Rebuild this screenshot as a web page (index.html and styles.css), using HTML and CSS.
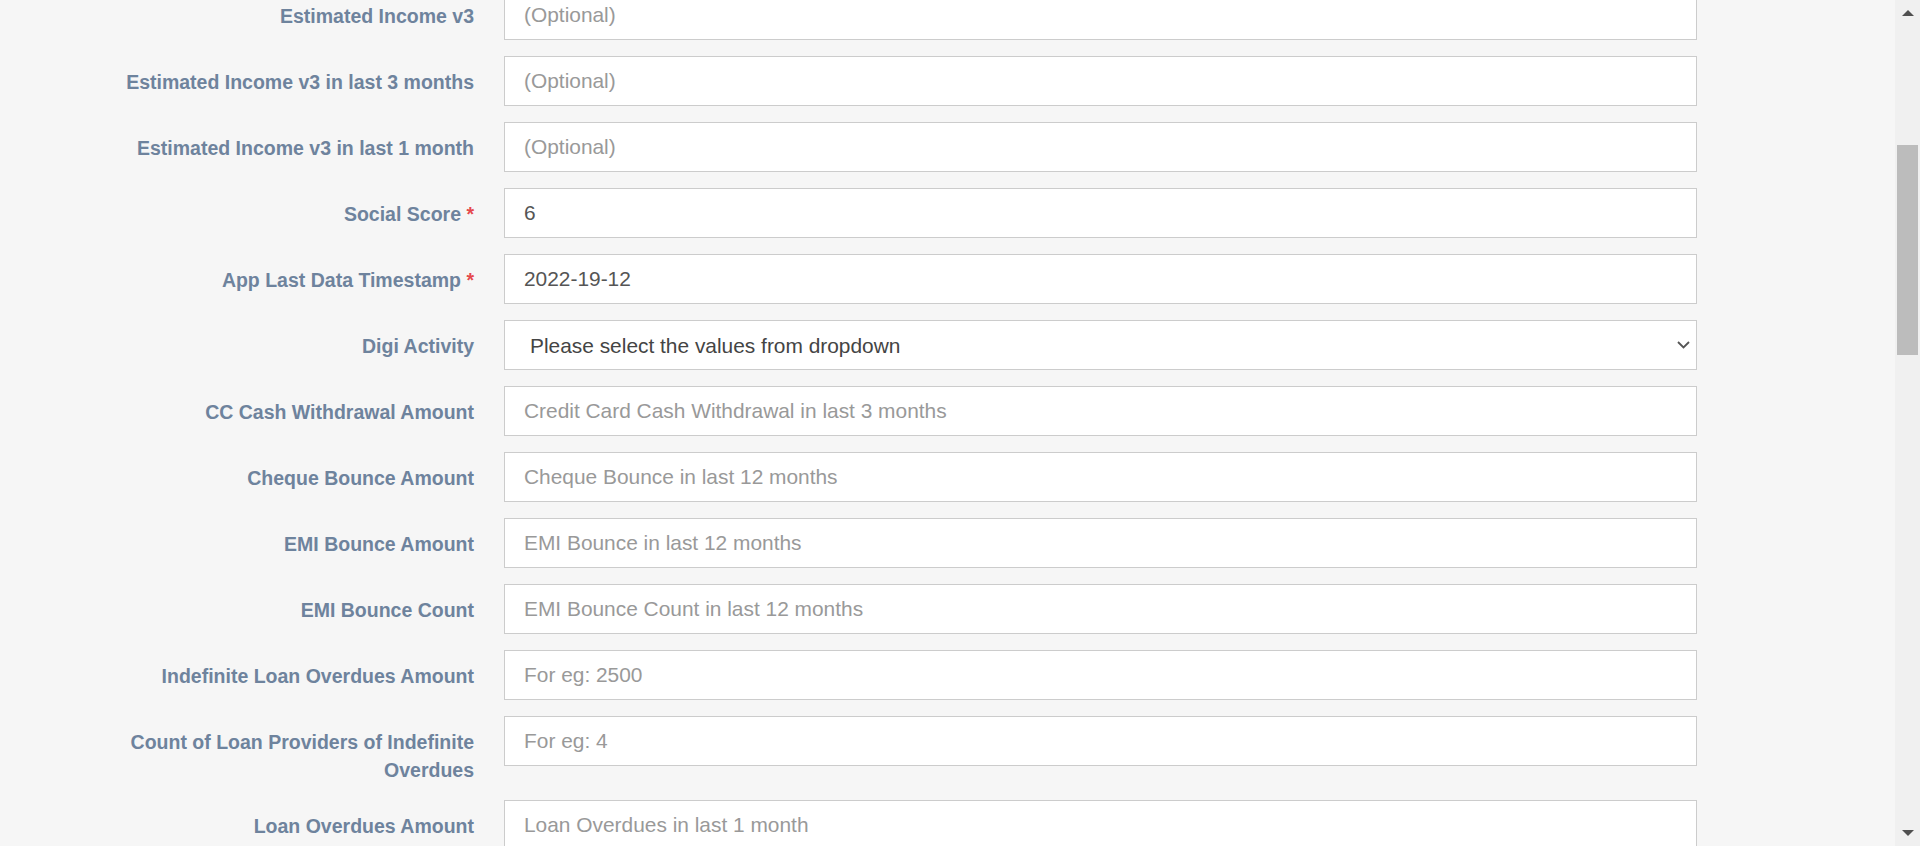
FILE: index.html
```html
<!DOCTYPE html>
<html lang="en">
<head>
<meta charset="utf-8">
<title>Form</title>
<link rel="stylesheet" href="styles.css">
</head>
<body>
<div class="page">
  <main class="main">
    <form class="form">
      <div class="row"><label class="lbl">Estimated Income v3</label><input class="field" type="text" placeholder="(Optional)"></div>
      <div class="row"><label class="lbl">Estimated Income v3 in last 3 months</label><input class="field" type="text" placeholder="(Optional)"></div>
      <div class="row"><label class="lbl">Estimated Income v3 in last 1 month</label><input class="field" type="text" placeholder="(Optional)"></div>
      <div class="row"><label class="lbl">Social Score <span class="req">*</span></label><input class="field" type="text" value="6"></div>
      <div class="row"><label class="lbl">App Last Data Timestamp <span class="req">*</span></label><input class="field" type="text" value="2022-19-12"></div>
      <div class="row"><label class="lbl">Digi Activity</label>
        <div class="select-wrap">
          <select class="field select"><option>Please select the values from dropdown</option></select>
          <svg class="chev" width="13" height="8" viewBox="0 0 13 8"><path d="M1 1 L6.5 6.5 L12 1" fill="none" stroke="#555" stroke-width="1.8"/></svg>
        </div>
      </div>
      <div class="row"><label class="lbl">CC Cash Withdrawal Amount</label><input class="field" type="text" placeholder="Credit Card Cash Withdrawal in last 3 months"></div>
      <div class="row"><label class="lbl">Cheque Bounce Amount</label><input class="field" type="text" placeholder="Cheque Bounce in last 12 months"></div>
      <div class="row"><label class="lbl">EMI Bounce Amount</label><input class="field" type="text" placeholder="EMI Bounce in last 12 months"></div>
      <div class="row"><label class="lbl">EMI Bounce Count</label><input class="field" type="text" placeholder="EMI Bounce Count in last 12 months"></div>
      <div class="row"><label class="lbl">Indefinite Loan Overdues Amount</label><input class="field" type="text" placeholder="For eg: 2500"></div>
      <div class="row"><label class="lbl">Count of Loan Providers of Indefinite Overdues</label><input class="field" type="text" placeholder="For eg: 4"></div>
      <div class="row"><label class="lbl">Loan Overdues Amount</label><input class="field" type="text" placeholder="Loan Overdues in last 1 month"></div>
    </form>
  </main>
  <div class="scrollbar">
    <div class="sb-btn"><span class="tri-up"></span></div>
    <div class="sb-track"><div class="sb-thumb"></div></div>
    <div class="sb-btn sb-btn-down"><span class="tri-down"></span></div>
  </div>
</div>
</body>
</html>
```

FILE: styles.css
```css
html, body {
  margin: 0;
  padding: 0;
  height: 846px;
  overflow: hidden;
  background: #f6f6f6;
  font-family: "Liberation Sans", Arial, sans-serif;
}

.page {
  display: flex;
  height: 846px;
}

.main {
  flex: 1;
  overflow: hidden;
}

.form {
  display: flex;
  flex-direction: column;
  gap: 16px;
  margin-top: -10px;
  padding-left: 100px;
}

.row {
  display: flex;
  align-items: flex-start;
  gap: 30px;
}

.lbl {
  width: 374px;
  flex: none;
  box-sizing: border-box;
  padding-top: 12px;
  text-align: right;
  font-size: 19.5px;
  line-height: 28px;
  font-weight: bold;
  color: #6e839d;
}

.req {
  color: #e5484d;
}

.field {
  width: 1193px;
  height: 50px;
  box-sizing: border-box;
  flex: none;
  margin: 0;
  border: 1px solid #cccccc;
  border-radius: 0;
  background: #ffffff;
  padding: 0 19px;
  font-family: "Liberation Sans", Arial, sans-serif;
  font-size: 20.9px;
  color: #555555;
  outline: none;
}

.field::placeholder {
  color: #999999;
  opacity: 1;
}

.select-wrap {
  position: relative;
  flex: none;
  width: 1193px;
  height: 50px;
}

.select {
  appearance: none;
  -webkit-appearance: none;
  padding-left: 25px;
  color: #444444;
}

.chev {
  position: absolute;
  right: 7px;
  top: 21px;
}

.scrollbar {
  width: 25px;
  flex: none;
  background: #f0f0f0;
  display: flex;
  flex-direction: column;
}

.sb-btn {
  height: 25px;
  display: flex;
  justify-content: center;
  padding-top: 10px;
  box-sizing: border-box;
}

.sb-btn-down {
  padding-top: 9px;
}

.tri-up {
  width: 0;
  height: 0;
  border-left: 6px solid transparent;
  border-right: 6px solid transparent;
  border-bottom: 6px solid #505050;
}

.tri-down {
  width: 0;
  height: 0;
  border-left: 6px solid transparent;
  border-right: 6px solid transparent;
  border-top: 6px solid #505050;
}

.sb-track {
  flex: 1;
  padding: 120px 2px 0;
}

.sb-thumb {
  height: 210px;
  background: #bcbcbc;
}
```
